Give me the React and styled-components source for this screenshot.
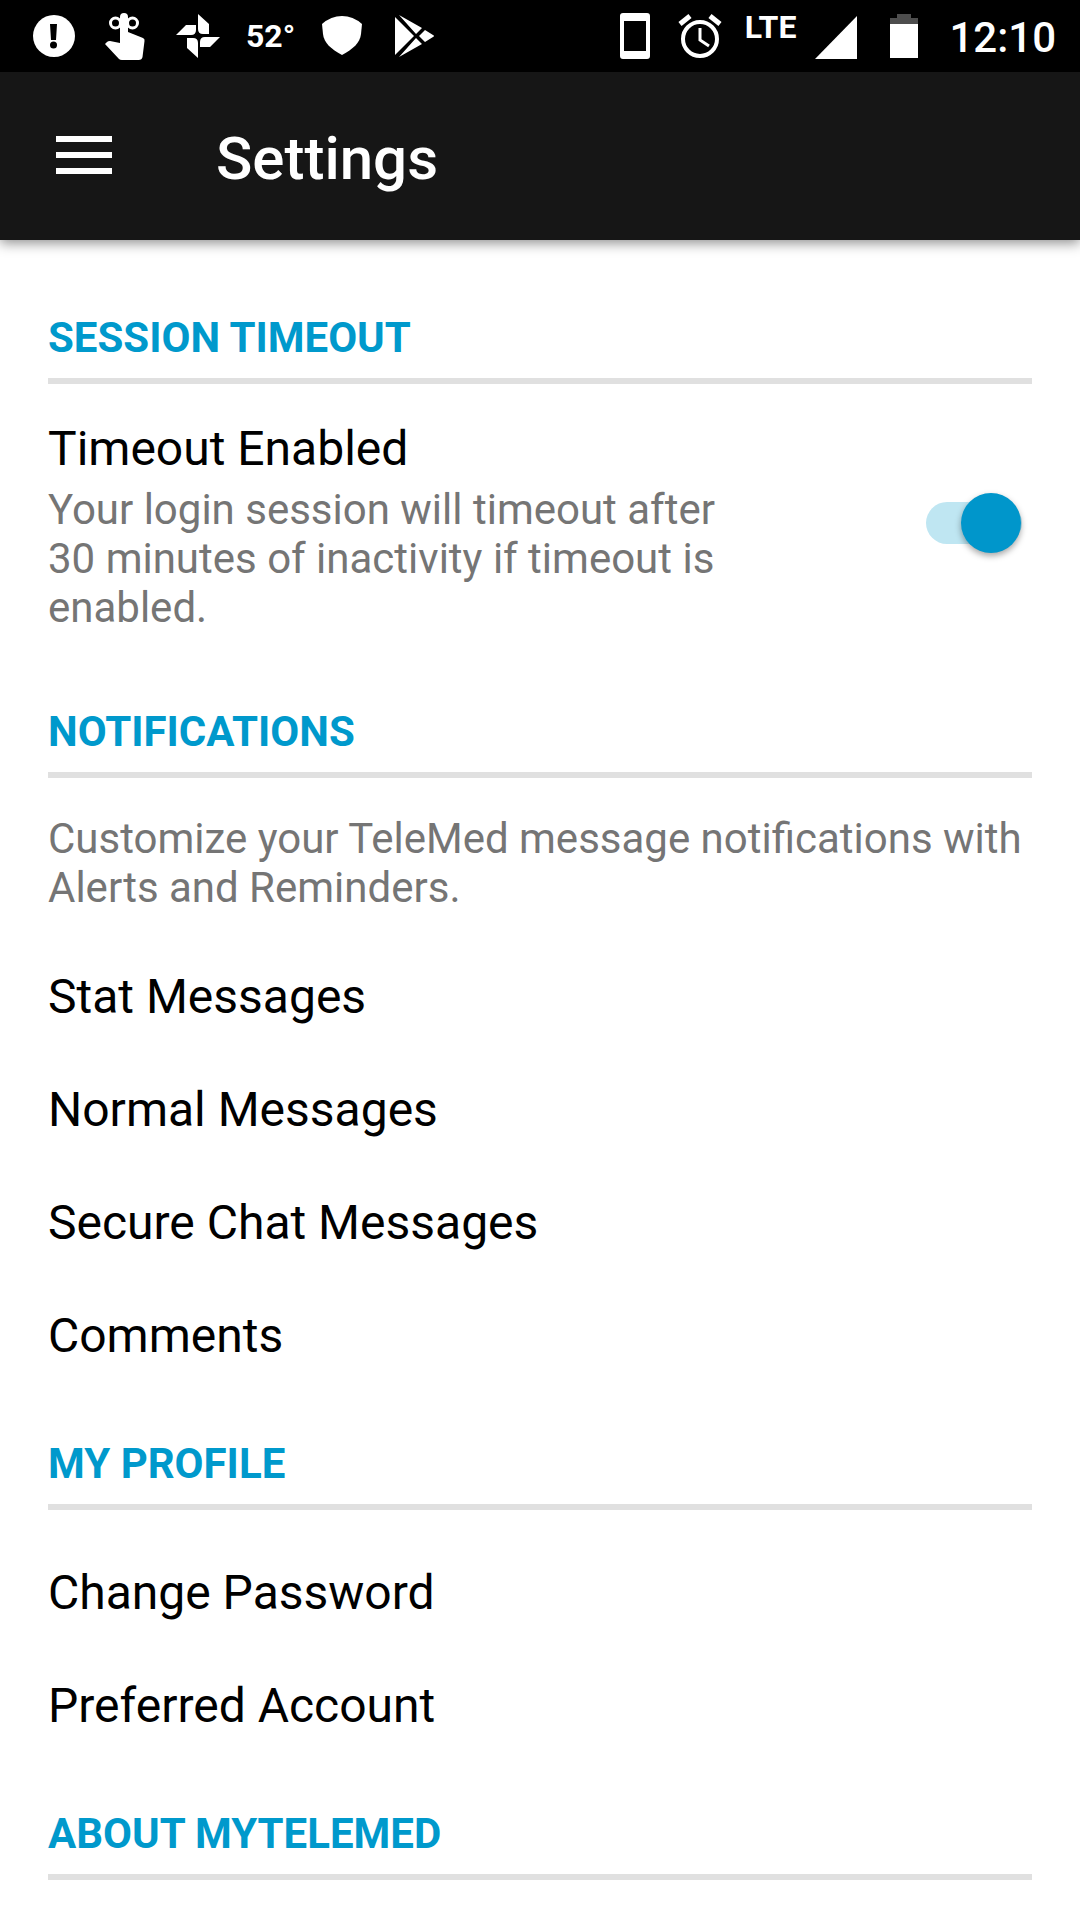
import React, { useState } from 'react';
import styled, { createGlobalStyle } from 'styled-components';

const GlobalStyle = createGlobalStyle`
  * {
    box-sizing: border-box;
  }

  body {
    margin: 0;
    background: #fff;
    color: #000;
    font-family: Roboto, 'Liberation Sans', sans-serif;
    overflow-x: hidden;
  }
`;

const StatusBar = styled.div`
  display: flex;
  justify-content: space-between;
  height: 72px;
  padding: 0 24px 0 30px;
  background: #000;
  color: #fff;
`;

const StatusGroup = styled.div`
  display: flex;
  align-items: center;
  gap: ${({ $gap }) => $gap};
`;

const StatusIcon = styled.svg`
  display: block;
  width: 48px;
  height: 48px;
  fill: currentColor;
`;

const Temperature = styled.span`
  font-size: 32px;
  font-weight: 700;
  line-height: 38px;
`;

const Network = styled.span`
  align-self: flex-start;
  padding-top: 8px;
  font-size: 32px;
  font-weight: 700;
  line-height: 38px;
`;

const Clock = styled.time`
  padding-top: 2px;
  font-size: 42px;
  font-weight: 500;
  line-height: 49px;
`;

const AppBar = styled.header`
  position: relative;
  display: flex;
  align-items: center;
  height: 168px;
  padding: 0 48px;
  gap: 96px;
  background: #161616;
  color: #fff;
  box-shadow: 0 3px 12px rgba(0, 0, 0, 0.45);
`;

const MenuButton = styled.button`
  display: flex;
  flex-direction: column;
  gap: 10px;
  width: 72px;
  padding: 0 8px 2px;
  border: 0;
  background: none;
  cursor: pointer;
`;

const MenuLine = styled.span`
  height: 6px;
  background: #fff;
`;

const PageTitle = styled.h1`
  margin: 0;
  padding-top: 6px;
  font-size: 60px;
  font-weight: 500;
  line-height: 72px;
`;

const Content = styled.main`
  padding: 72px 48px 0;
`;

const Section = styled.section`
  & + & {
    margin-top: 46px;
  }
`;

const SectionTitle = styled.h2`
  margin: 0;
  padding-bottom: 15px;
  border-bottom: 6px solid #e0e0e0;
  color: #0099cc;
  font-size: 42px;
  font-weight: 700;
  line-height: 51px;
  text-transform: uppercase;
`;

const ToggleRow = styled.div`
  display: flex;
  justify-content: space-between;
  align-items: center;
  padding: 30px 0 28px;
`;

const ToggleText = styled.div`
  max-width: 700px;
  padding-top: 6px;
`;

const ToggleLabel = styled.label`
  display: block;
  padding-bottom: 8px;
  font-size: 48px;
  line-height: 57px;
`;

const Description = styled.p`
  margin: 0;
  color: #757575;
  font-size: 42px;
  line-height: 49px;
`;

const Switch = styled.input`
  appearance: none;
  flex: none;
  display: flex;
  align-items: center;
  width: 96px;
  height: 42px;
  margin: 0 10px 0 0;
  border-radius: 21px;
  background: ${({ checked }) => (checked ? '#bfe6f2' : '#b9b9b9')};
  cursor: pointer;

  &::before {
    content: '';
    width: 60px;
    height: 60px;
    margin-left: ${({ checked }) => (checked ? '35px' : '0')};
    border-radius: 50%;
    background: ${({ checked }) => (checked ? '#0096cb' : '#f1f1f1')};
    box-shadow: 0 3px 6px rgba(0, 0, 0, 0.35);
  }
`;

const SectionIntro = styled.div`
  padding: 36px 0 28px;
`;

const LinkList = styled.ul`
  margin: 0;
  padding: ${({ $spaced }) => ($spaced ? '26px' : '0')} 0 0;
  list-style: none;
`;

const LinkItem = styled.a`
  display: block;
  padding: 28px 0;
  color: inherit;
  font-size: 48px;
  line-height: 57px;
  text-decoration: none;
`;

const notificationLinks = ['Stat Messages', 'Normal Messages', 'Secure Chat Messages', 'Comments'];
const profileLinks = ['Change Password', 'Preferred Account'];

function Links({ items, spaced }) {
  return (
    <LinkList $spaced={spaced}>
      {items.map((item) => (
        <li key={item}>
          <LinkItem href={`#${item.toLowerCase().replace(/ /g, '-')}`}>{item}</LinkItem>
        </li>
      ))}
    </LinkList>
  );
}

function StatusIcons() {
  return (
    <StatusBar>
      <StatusGroup $gap="24px">
        {/* alert */}
        <StatusIcon viewBox="0 0 48 48">
          <circle cx="24" cy="24" r="21" />
          <path d="M20 12h7l-1 16h-5z" fill="#000" />
          <circle cx="23.5" cy="33" r="3.5" fill="#000" />
        </StatusIcon>
        {/* reminder finger */}
        <StatusIcon viewBox="0 0 48 48">
          <path d="M18 5a4 4 0 0 1 8 0v15l15 6q2 1 1.5 3l-2 16q-.5 3-4 3H20q-2 0-3-1L3 32l2-2q1-1 3-1l10 2z" />
          <g fill="none" stroke="#fff" strokeWidth="3">
            <circle cx="13.5" cy="11" r="5" />
            <circle cx="30.5" cy="11" r="5" />
          </g>
        </StatusIcon>
        {/* pinwheel */}
        <StatusIcon viewBox="0 0 48 48">
          <path d="M24 2l11 10v10h-6q-5 0-5-5zM22 13v5q0 5-5 5H2l10-10zM26 35v-5q0-5 5-5h15L36 35zM13 26h6q5 0 5 5v15L13 36z" />
        </StatusIcon>
        <Temperature>52°</Temperature>
        {/* shield */}
        <StatusIcon viewBox="0 0 48 48">
          <path d="M23 4q11 0 20 8l-1 10c-1 9-8 15-19 21C12 37 5 31 4 22L3 12q9-8 20-8z" />
        </StatusIcon>
        {/* play store */}
        <StatusIcon viewBox="0 0 48 48">
          <path d="M4 5l19 19L4 43zM8 3l23 13-6 6zM8 45l17-19 6 6zM34 18l8 5q2 1 0 2l-8 5-6-6z" />
        </StatusIcon>
      </StatusGroup>
      <StatusGroup $gap="19px">
        {/* phone */}
        <StatusIcon viewBox="0 0 48 48">
          <path fillRule="evenodd" d="M12 1h24q3 0 3 3v40q0 3-3 3H12q-3 0-3-3V4q0-3 3-3zm1 8v30h22V9z" />
        </StatusIcon>
        {/* alarm */}
        <StatusIcon viewBox="0 0 48 48">
          <g fill="none" stroke="#fff">
            <circle cx="22" cy="27" r="17" strokeWidth="4" />
            <path d="M22 16v12l9 6" strokeWidth="3" />
            <path d="M2 12l10-8M32 4l10 8" strokeWidth="5" />
          </g>
        </StatusIcon>
        <Network>LTE</Network>
        {/* signal */}
        <StatusIcon viewBox="0 0 48 48">
          <path d="M42 4v43H0z" />
        </StatusIcon>
        {/* battery */}
        <StatusIcon viewBox="0 0 48 48">
          <path d="M15 2h14v4h7v6H8V6h7z" fill="#4d4d4d" />
          <path d="M8 12h28v34H8z" />
        </StatusIcon>
        <Clock>12:10</Clock>
      </StatusGroup>
    </StatusBar>
  );
}

function App() {
  const [timeoutEnabled, setTimeoutEnabled] = useState(true);

  return (
    <>
      <GlobalStyle />
      <StatusIcons />
      <AppBar>
        <MenuButton type="button" aria-label="Menu">
          <MenuLine />
          <MenuLine />
          <MenuLine />
        </MenuButton>
        <PageTitle>Settings</PageTitle>
      </AppBar>
      <Content>
        <Section>
          <SectionTitle>Session Timeout</SectionTitle>
          <ToggleRow>
            <ToggleText>
              <ToggleLabel htmlFor="timeout">Timeout Enabled</ToggleLabel>
              <Description>
                Your login session will timeout after 30 minutes of inactivity if timeout is enabled.
              </Description>
            </ToggleText>
            <Switch
              id="timeout"
              type="checkbox"
              checked={timeoutEnabled}
              onChange={(e) => setTimeoutEnabled(e.target.checked)}
            />
          </ToggleRow>
        </Section>
        <Section>
          <SectionTitle>Notifications</SectionTitle>
          <SectionIntro>
            <Description>Customize your TeleMed message notifications with Alerts and Reminders.</Description>
          </SectionIntro>
          <Links items={notificationLinks} />
        </Section>
        <Section>
          <SectionTitle>My Profile</SectionTitle>
          <Links items={profileLinks} spaced />
        </Section>
        <Section>
          <SectionTitle>About MyTeleMed</SectionTitle>
        </Section>
      </Content>
    </>
  );
}

export default App;
